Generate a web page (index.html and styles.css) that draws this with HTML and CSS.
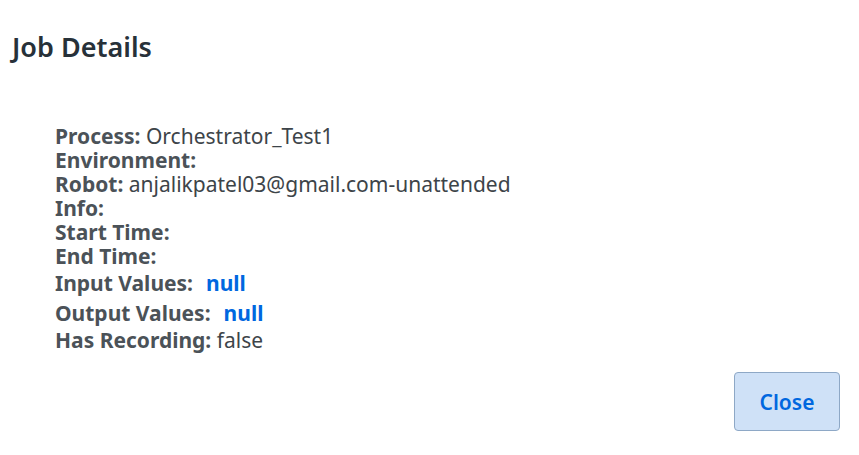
FILE: index.html
```html
<!DOCTYPE html>
<html>
<head>
<meta charset="utf-8">
<link rel="stylesheet" href="styles.css">
</head>
<body>
<div class="dialog">
  <h2 class="title">Job Details</h2>
  <div class="details">
    <div class="row"><span class="label">Process:</span> Orchestrator_Test1</div>
    <div class="row"><span class="label">Environment:</span></div>
    <div class="row"><span class="label">Robot:</span> anjalikpatel03@gmail.com-unattended</div>
    <div class="row"><span class="label">Info:</span></div>
    <div class="row"><span class="label">Start Time:</span></div>
    <div class="row"><span class="label">End Time:</span></div>
    <div class="row tall"><span class="label">Input Values:</span><span class="null">null</span></div>
    <div class="row tall"><span class="label">Output Values:</span><span class="null">null</span></div>
    <div class="row"><span class="label">Has Recording:</span> false</div>
  </div>
  <div class="actions">
    <button class="btn">Close</button>
  </div>
</div>
</body>
</html>
```
FILE: styles.css
```css
html, body {
  margin: 0;
  padding: 0;
  background: #ffffff;
}
body {
  font-family: "Noto Sans", "Open Sans", sans-serif;
  color: #3d4449;
}
.dialog {
  display: flex;
  flex-direction: column;
  padding: 0 19px 0 12px;
}
.title {
  margin: 30px 0 0 0;
  font-size: 27px;
  font-weight: 600;
  line-height: 34px;
  color: #273139;
}
.details {
  margin: 60px 0 0 43px;
  font-size: 21px;
  line-height: 24px;
}
.row {
  white-space: nowrap;
  height: 24px;
}
.row.tall {
  height: 30px;
  line-height: 30px;
}
.label {
  font-weight: 700;
  color: #4b5258;
}
.null {
  font-weight: 700;
  color: #0067df;
  margin-left: 13px;
}
.actions {
  display: flex;
  justify-content: flex-end;
  margin-top: 20px;
}
.btn {
  width: 106px;
  height: 59px;
  background: #cfe1f7;
  border: 1px solid #8ea8c6;
  border-radius: 4px;
  color: #0067df;
  font-family: "Noto Sans", "Open Sans", sans-serif;
  font-size: 21px;
  font-weight: 600;
}
```
